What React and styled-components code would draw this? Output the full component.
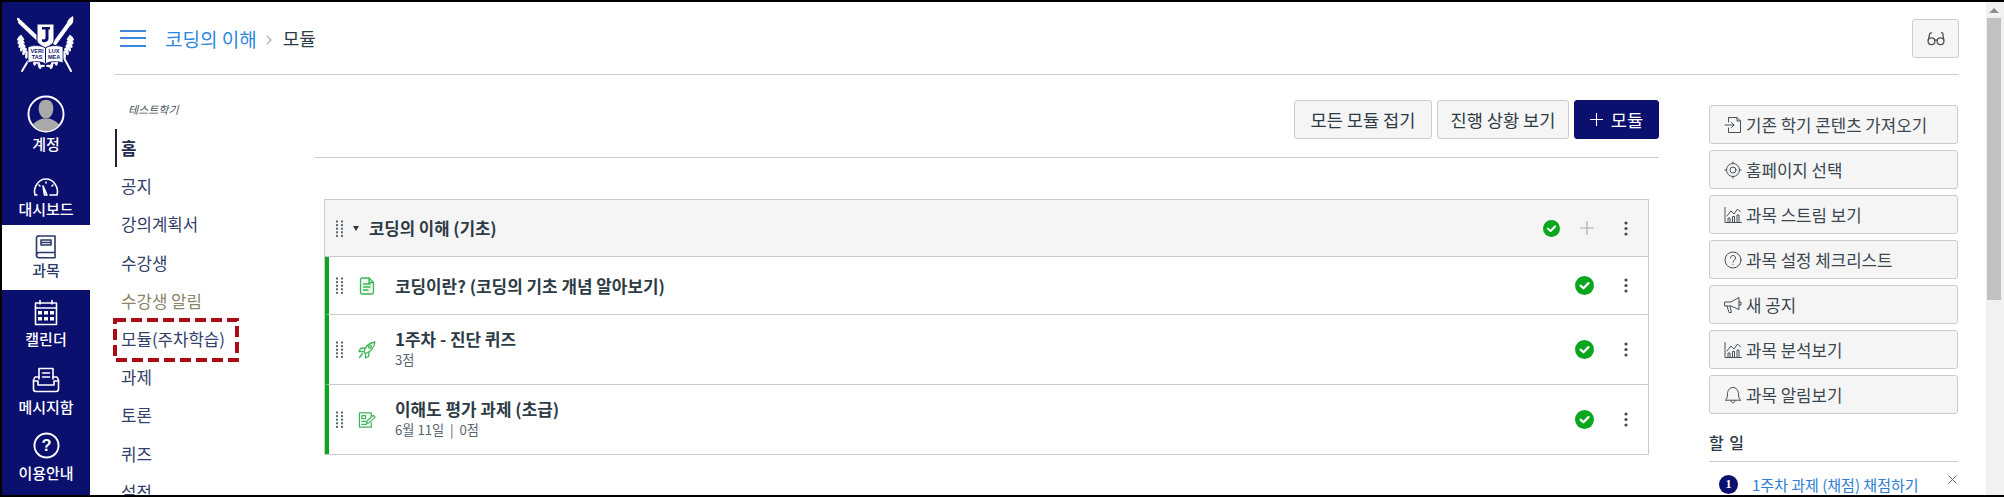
import React from "react";
import styled, { createGlobalStyle } from "styled-components";

const Global = createGlobalStyle`
  html, body { margin: 0; padding: 0; background: #fff; overflow: hidden; }
  * { box-sizing: border-box; }
  body { font-family: "Noto Sans CJK KR", "Noto Sans", sans-serif; color: #2d3b45; }
`;
const NAVY = "#0b0f6e";
const Frame = styled.div`
  width: 2004px; height: 497px; display: flex; overflow: hidden;
  border-top: 2px solid #000; border-bottom: 2px solid #000; border-left: 2px solid #000;
`;
const Sidebar = styled.nav`
  width: 88px; flex: none; background: ${NAVY}; display: flex; flex-direction: column; overflow: hidden;
`;
const LogoBox = styled.div`
  height: 87px; flex: none; padding: 14px 0 0 15px;
`;
const NavItem = styled.div`
  height: ${p => p.$h}px; flex: none; display: flex; flex-direction: column; align-items: center; justify-content: flex-end;
  gap: ${p => p.$gap}px; padding-bottom: ${p => p.$pb}px;
  background: ${p => (p.$active ? "#fff" : "transparent")};
  color: ${p => (p.$active ? "#2b3a6b" : "#fff")};
  font-size: 15px; font-weight: 500; line-height: 20px;
`;
const Main = styled.div`flex: 1; min-width: 0; display: flex; flex-direction: column;`;
const Header = styled.header`
  height: 73px; margin: 0 27px 0 25px; border-bottom: 1px solid #c7cdd1; display: flex; align-items: center;
  padding-left: 5px; flex: none;
`;
const Burger = styled.div`
  width: 26px; height: 17px; display: flex; flex-direction: column; justify-content: space-between; margin-right: 19px;
  span { display: block; height: 2px; background: #3f86e0; }
`;
const Crumb = styled.span`font-size: 19px; color: #2d87e0;`;
const CrumbSep = styled.span`display: flex; margin: 3px 11px 0 9px;`;
const CrumbNow = styled.span`font-size: 18px; color: #2d3b45;`;
const GlassesBtn = styled.button`
  margin-left: auto; width: 47px; height: 39px; background: #f5f5f5; border: 1px solid #c7cdd1; border-radius: 3px;
  display: flex; align-items: center; justify-content: center; padding: 0;
`;
const Body = styled.div`flex: 1; display: flex; padding-left: 25px; min-height: 0; overflow: hidden;`;
const CourseMenu = styled.div`width: 200px; flex: none; padding-top: 26px;`;
const Term = styled.div`font-size: 11px; font-style: italic; color: #4a555d; margin: 0 0 12px 13px; line-height: 16px;`;
const MenuItem = styled.div`
  height: 38.2px; display: flex; align-items: center; position: relative; padding-left: 6px; font-size: 16.8px;
  font-weight: ${p => (p.$current ? 700 : 400)};
  color: ${p => p.$muted ? "#8a8468" : p.$current ? "#262d52" : "#33406a"};
  ${p => p.$current && "border-left: 2px solid #1c2430; padding-left: 4px;"}
`;
const Highlight = styled.svg`
  position: absolute; left: -2px; top: -2px; pointer-events: none;
`;
const Content = styled.div`width: 1344px; flex: none;`;
const Toolbar = styled.div`
  display: flex; justify-content: flex-end; gap: 5px; padding-top: 25px; border-bottom: 1px solid #c7cdd1; height: 83px;
`;
const Button = styled.button`
  height: 39px; width: ${p => p.$w}px; border-radius: 3px; font: 400 17.6px "Noto Sans CJK KR", sans-serif; padding: 0;
  display: flex; align-items: center; justify-content: center; gap: 8px;
  border: 1px solid ${p => (p.$primary ? NAVY : "#c7cdd1")};
  background: ${p => (p.$primary ? NAVY : "#f5f5f5")};
  color: ${p => (p.$primary ? "#fff" : "#2d3b45")};
`;
const Module = styled.section`margin: 41px 10px 0 9px; border: 1px solid #c7cdd1;`;
const ModuleHead = styled.div`
  height: 57px; background: #f5f5f5; border-bottom: 1px solid #c7cdd1; display: flex; align-items: center; padding-left: 10px;
  font-size: 16.7px; font-weight: 700; color: #2d3b45;
`;
const Caret = styled.span`
  width: 0; height: 0; border-left: 3.5px solid transparent; border-right: 3.5px solid transparent; border-top: 5px solid #2d3b45;
  margin: 0 10px 0 9px;
`;
const Row = styled.div`
  height: ${p => p.$h}px; display: flex; align-items: center; border-left: 4px solid #0aa61e; padding-left: 6px;
  & + & { border-top: 1px solid #c7cdd1; }
`;
const IconCell = styled.span`width: 37px; margin-left: 14px; display: flex; flex: none;`;
const ItemText = styled.div`display: flex; flex-direction: column; margin-top: ${p => (p.$meta ? -3 : 0)}px;`;
const ItemTitle = styled.div`font-size: 16.9px; font-weight: 700; color: #2d3b45; line-height: 24px;`;
const ItemMeta = styled.div`font-size: 13.2px; color: #59666e; line-height: 18px;`;
const Actions = styled.div`margin-left: auto; display: flex; align-items: center; flex: none;`;
const KebabCell = styled.span`display: flex; margin: 0 20px 0 30px;`;
const PlusCell = styled.span`display: flex; margin-left: 20px;`;
const Aside = styled.aside`width: 249px; margin-left: 50px; flex: none; padding-top: 30px;`;
const AsideButtons = styled.div`display: flex; flex-direction: column; gap: 6px;`;
const AsideBtn = styled.div`
  height: 39px; background: #f5f5f5; border: 1px solid #c7cdd1; border-radius: 3px; display: flex; align-items: center;
  padding-left: 14px; gap: 4px; font-size: 16.8px; color: #3b474f;
`;
const TodoTitle = styled.h3`
  margin: 15px 0 0; padding-bottom: 6px; font-size: 16px; font-weight: 500; height: 33px; line-height: 26px; letter-spacing: 1px;
  border-bottom: 1px solid #c7cdd1; color: #2d3b45;
`;
const TodoRow = styled.div`display: flex; align-items: center; padding: 12px 0 0 10px; font-size: 15px; color: #2d7dd2; position: relative;`;
const Badge = styled.span`
  width: 19px; height: 19px; border-radius: 50%; background: ${NAVY}; color: #fff; font: 700 12px "Liberation Serif", serif;
  display: flex; align-items: center; justify-content: center; margin-right: 14px; flex: none;
`;
const Close = styled.svg`position: absolute; right: 1px; top: 13px;`;
const Scrollbar = styled.div`width: 18px; flex: none; background: #f1f1f1; display: flex; flex-direction: column; align-items: center; padding-right: 3px;`;
const ScrollArrow = styled.span`
  height: 16px; flex: none; display: flex; align-items: center; justify-content: center;
  &::before { content: ""; border-left: 5px solid transparent; border-right: 5px solid transparent; border-bottom: 5px solid #8e8e8e; }
`;
const Thumb = styled.div`width: 14px; height: 282px; background: #c1c1c1;`;

const Leaves = () => (
  <g fill="#fff">
    {Array.from({ length: 9 }, (_, i) => {
      const t = 175 + i * 9.5; // degrees along the lower-left arc, mirrored to the right
      const r = (t * Math.PI) / 180;
      const lx = 28.5 + 25 * Math.cos(r + Math.PI / 2 - Math.PI / 2);
      const ly = 22 - 30 * Math.sin(r - Math.PI + 0) * -1;
      const y = 22 + (i / 8) * 28;
      const x = 2.5 + Math.pow(i / 8, 2.2) * 20;
      const tilt = 90 - (i / 8) * 55;
      return (
        <g key={i}>
          <ellipse cx={x - 0.2} cy={y} rx="3.4" ry="1.5" transform={`rotate(${tilt + 40} ${x} ${y})`} />
          <ellipse cx={x + 0.2} cy={y} rx="3.4" ry="1.5" transform={`rotate(${tilt - 40 + 80} ${x} ${y}) translate(0 0)`} opacity="0" />
          <ellipse cx={x + 2.6} cy={y} rx="3" ry="1.3" transform={`rotate(${tilt - 40} ${x + 2.6} ${y})`} />
          <ellipse cx={57 - x + 0.2} cy={y} rx="3.4" ry="1.5" transform={`rotate(${-tilt - 40} ${57 - x} ${y})`} />
          <ellipse cx={57 - x - 2.6} cy={y} rx="3" ry="1.3" transform={`rotate(${-tilt + 40} ${57 - x - 2.6} ${y})`} />
        </g>
      );
    })}
  </g>
);
const Logo = () => (
  <svg width="57" height="58" viewBox="0 0 57 58" fill="none">
    <Leaves />
    <g stroke="#fff" strokeLinecap="round">
      <path d="M3 6L21 23" strokeWidth="4" />
      <path d="M54 5L38 27" strokeWidth="4" />
      <path d="M47 42L54 55M11 45L5 55" strokeWidth="2" />
      <path d="M1 3L5 8" strokeWidth="2.5" />
    </g>
    <path d="M50 8C50 4 53 2 56 0C57 4 56 9 52 10Z" fill="#fff" />
    <path d="M20 8H37V24C37 28 32 30 28.5 32C25 30 20 28 20 24Z" fill="#fff" stroke={NAVY} strokeWidth="1" />
    <path d="M25 11H33V13.5H31.5V23C31.5 26 27 27 25 25.5V23C27 24 28.5 23.5 28.5 21.5V13.5H25Z" fill={NAVY} />
    <path d="M11 31C16 29 24 29 28.5 32C33 29 41 29 46 31V47C41 45 33 45 28.5 48C24 45 16 45 11 47Z" fill="#fff" stroke={NAVY} strokeWidth=".8" />
    <g fill={NAVY} fontSize="5.5" fontWeight="700" fontFamily="Liberation Sans, sans-serif" textAnchor="middle">
      <text x="20" y="37">VERI</text><text x="37" y="37">LUX</text>
      <text x="20" y="43">TAS</text><text x="37" y="43">MEA</text>
    </g>
    <path d="M28.5 32V47" stroke={NAVY} strokeWidth="1" />
  </svg>
);
const Avatar = () => (
  <svg width="38" height="38" viewBox="0 0 39 39">
    <defs><clipPath id="av"><circle cx="19.5" cy="19.5" r="17.5" /></clipPath></defs>
    <circle cx="19.5" cy="19.5" r="18" fill={NAVY} stroke="#fff" strokeWidth="2" />
    <g clipPath="url(#av)" fill="#a9a9a9">
      <path d="M12 14C12 8 15 5 19.5 5S27 8 27 14C27 19 24 24 19.5 24S12 19 12 14Z" />
      <path d="M4 36C5 28 11 26 16 24H23C28 26 34 28 35 36V39H4Z" />
    </g>
  </svg>
);
const stroke = { fill: "none", stroke: "currentColor", strokeWidth: 1.6, strokeLinecap: "round", strokeLinejoin: "round" };
const Gauge = () => (
  <svg width="28" height="20" viewBox="0 0 28 20" {...stroke}>
    <path d="M5 18H3C1 11 6 2 14 2S27 11 25 18H18" />
    <path d="M11 9L15 18H12.5Z" />
    <path d="M14 5V6M7 8L8 9M21 8L20 9" />
  </svg>
);
const BookIc = () => (
  <svg width="22" height="24" viewBox="0 0 22 24" {...stroke} color="#2b3a6b">
    <path d="M3.5 1H20V17.5H4C2.5 17.5 1.5 18.5 1.5 20S2.5 22.8 4 22.8H20V17.5" />
    <path d="M1.5 20V3C1.5 2 2.5 1 3.5 1" />
    <path d="M6 5H16V10H6ZM6 7.5H16" />
  </svg>
);
const Calendar = () => (
  <svg width="24" height="27" viewBox="0 0 24 27" {...stroke}>
    <path d="M1.5 4H22.5V25.5H1.5Z" />
    <path d="M1.5 9H22.5M6 1.5V5M18 1.5V5" />
    <g fill="currentColor" stroke="none">
      {[4, 10, 16].flatMap(x => [12, 18].map(y => <rect key={x + "-" + y} x={x} y={y} width="4" height="3.5" />))}
    </g>
  </svg>
);
const Inbox = () => (
  <svg width="28" height="26" viewBox="0 0 28 26" {...stroke}>
    <path d="M7 12V1.5H21V12" />
    <path d="M10.5 6H17.5M10.5 10H17.5" />
    <path d="M7 10H3L1.5 13V22C1.5 23.5 2.5 24.5 4 24.5H24C25.5 24.5 26.5 23.5 26.5 22V13L25 10H21" />
    <path d="M1.5 14H6V18H22V14H26.5" />
  </svg>
);
const Help = () => (
  <svg width="27" height="27" viewBox="0 0 28 28">
    <circle cx="14" cy="14" r="12.5" fill="none" stroke="#fff" strokeWidth="2" />
    <text x="14" y="20" textAnchor="middle" fill="#fff" fontSize="17" fontWeight="700" fontFamily="Liberation Sans, sans-serif">?</text>
  </svg>
);
const Chevron = () => (
  <svg width="6" height="10" viewBox="0 0 6 10" fill="none" stroke="#a3abb0" strokeWidth="1.2"><path d="M.7 .7L5 5L.7 9.3" /></svg>
);
const Glasses = () => (
  <svg width="18" height="15" viewBox="0 0 20 16" fill="none" stroke="#47525a" strokeWidth="1.4" strokeLinecap="round">
    <circle cx="5" cy="11" r="3.8" /><circle cx="15" cy="11" r="3.8" />
    <path d="M8.6 10C9.5 9.4 10.5 9.4 11.4 10M1.3 10L3 3C3.2 2 4 1.6 5 1.8M18.7 10L17.6 2.5C17.4 1.6 16.7 1.4 16 1.6" />
  </svg>
);
const Grip = () => (
  <svg width="9" height="17" viewBox="0 0 9 17" fill="#5b6770">
    {[0, 1, 2, 3, 4].flatMap(r => [0, 1].map(c => <rect key={r + "-" + c} x={c * 5 + 1} y={r * 3.6 + 0.5} width="2" height="2" />))}
  </svg>
);
const Check = ({ size = 19 }) => (
  <svg width={size} height={size} viewBox="0 0 18 18">
    <circle cx="9" cy="9" r="9" fill="#0aa61e" />
    <path d="M5.3 9.2L8 11.6L12.8 6.8" fill="none" stroke="#fff" strokeWidth="2.2" strokeLinecap="round" strokeLinejoin="round" />
  </svg>
);
const Kebab = () => (
  <svg width="4" height="15" viewBox="0 0 4 15" fill="#3f4b53">
    <circle cx="2" cy="2" r="1.6" /><circle cx="2" cy="7.5" r="1.6" /><circle cx="2" cy="13" r="1.6" />
  </svg>
);
const Plus = ({ color = "#a7adb2", size = 14 }) => (
  <svg width={size} height={size} viewBox="0 0 14 14" stroke={color} strokeWidth="1.2"><path d="M7 0V14M0 7H14" /></svg>
);
const green = { fill: "none", stroke: "#3fb45a", strokeWidth: 1.3, strokeLinejoin: "round", strokeLinecap: "round" };
const PageIc = () => (
  <svg width="16" height="18" viewBox="0 0 16 18" {...green} style={{ marginLeft: 1 }}>
    <path d="M1.5 2.5C1.5 1.5 2 1 3 1H10L14.5 5.5V15.5C14.5 16.5 14 17 13 17H3C2 17 1.5 16.5 1.5 15.5Z" fill="#eaf7ec" />
    <path d="M10 1V5.5H14.5M4.5 7H11M4.5 10H11M4.5 13H9" />
  </svg>
);
const RocketIc = () => (
  <svg width="18" height="18" viewBox="0 0 18 18" {...green}>
    <path d="M6 11C7 6 11 2 17 1C16 7 12 11 7.5 12.5Z" />
    <circle cx="12" cy="6" r="1.4" />
    <path d="M6.5 7L2.5 7.5L1 10.5L5 10.5M11 11.5L10.5 15.5L7.5 17L7.5 13M4.5 12.5L1.5 16.5" />
  </svg>
);
const AssignIc = () => (
  <svg width="18" height="18" viewBox="0 0 19 18" {...green}>
    <path d="M14 5V1.5H1.5V16.5H14V12" />
    <path d="M4 4.5H8V7.5H4ZM4 10.5H8M4 13.5H9" />
    <path d="M9 12.5L9.5 10L16 4L18 6L11.5 12Z" />
  </svg>
);
const thin = { fill: "none", stroke: "#47525a", strokeWidth: 1, strokeLinecap: "round", strokeLinejoin: "round" };
const ImportIc = () => (
  <svg width="18" height="18" viewBox="0 0 18 18" {...thin}>
    <path d="M4.5 6V1.5H13L16.5 5V16.5H4.5V12M1 9H10M7.5 6.5L10 9L7.5 11.5M13 1.5V5H16.5" />
  </svg>
);
const TargetIc = () => (
  <svg width="18" height="18" viewBox="0 0 18 18" {...thin}>
    <circle cx="9" cy="9" r="6.5" /><circle cx="9" cy="9" r="3" />
    <path d="M9 .8V2.5M9 15.5V17.2M.8 9H2.5M15.5 9H17.2" />
  </svg>
);
const ChartIc = () => (
  <svg width="18" height="18" viewBox="0 0 18 18" {...thin}>
    <path d="M1 1.5V16.5H17.5" />
    <path d="M3 10L7 5L10 8L13.5 3L16.5 6" />
    <path d="M4 16V12H6V16M8.5 16V10.5H10.5V16M13 16V9H15V16" />
  </svg>
);
const QIc = () => (
  <svg width="18" height="18" viewBox="0 0 18 18" {...thin}>
    <circle cx="9" cy="9" r="8" />
    <path d="M6.5 7C6.5 5.5 7.6 4.5 9 4.5S11.5 5.5 11.5 7C11.5 9 9 9 9 11M9 13.2V13.4" />
  </svg>
);
const MegaIc = () => (
  <svg width="18" height="18" viewBox="0 0 18 18" {...thin}>
    <path d="M1 6H7L15 1.5V13.5L7 10H1ZM3 10L5 16.5H7.5L6 10M15 6H17V9H15" />
  </svg>
);
const BellIc = () => (
  <svg width="18" height="18" viewBox="0 0 18 18" {...thin}>
    <path d="M1.5 14C3 13 3.5 11 3.5 8C3.5 4 6 1.5 9 1.5S14.5 4 14.5 8C14.5 11 15 13 16.5 14ZM7 14.5C7 16 8 16.8 9 16.8S11 16 11 14.5" />
  </svg>
);

const menu = ["공지", "강의계획서", "수강생"];
const menu2 = ["과제", "토론", "퀴즈", "설정"];
const aside = [
  [ImportIc, "기존 학기 콘텐츠 가져오기"], [TargetIc, "홈페이지 선택"], [ChartIc, "과목 스트림 보기"],
  [QIc, "과목 설정 체크리스트"], [MegaIc, "새 공지"], [ChartIc, "과목 분석보기"], [BellIc, "과목 알림보기"],
];

export default function App() {
  return (
    <>
      <Global />
      <Frame>
        <Sidebar>
          <LogoBox><Logo /></LogoBox>
          <NavItem $h={71} $pb={6} $gap={1}><Avatar />계정</NavItem>
          <NavItem $h={65} $pb={6} $gap={2}><Gauge />대시보드</NavItem>
          <NavItem $h={65} $active $pb={10} $gap={1}><BookIc />과목</NavItem>
          <NavItem $h={65} $pb={6} $gap={3}><Calendar />캘린더</NavItem>
          <NavItem $h={65} $pb={3} $gap={4}><Inbox />메시지함</NavItem>
          <NavItem $h={65} $pb={2} $gap={4}><Help />이용안내</NavItem>
        </Sidebar>
        <Main>
          <Header>
            <Burger><span /><span /><span /></Burger>
            <Crumb>코딩의 이해</Crumb><CrumbSep><Chevron /></CrumbSep><CrumbNow>모듈</CrumbNow>
            <GlassesBtn><Glasses /></GlassesBtn>
          </Header>
          <Body>
            <CourseMenu>
              <Term>테스트학기</Term>
              <MenuItem $current>홈</MenuItem>
              {menu.map(m => <MenuItem key={m}>{m}</MenuItem>)}
              <MenuItem $muted>수강생 알림</MenuItem>
              <MenuItem>
                모듈(주차학습)
                <Highlight width="126" height="44" viewBox="0 0 126 44" fill="none">
                  <rect x="2" y="2" width="122" height="40" stroke="#a80d18" strokeWidth="4" strokeDasharray="11 5" />
                </Highlight>
              </MenuItem>
              {menu2.map(m => <MenuItem key={m}>{m}</MenuItem>)}
            </CourseMenu>
            <Content>
              <Toolbar>
                <Button $w={138}>모든 모듈 접기</Button>
                <Button $w={132}>진행 상황 보기</Button>
                <Button $w={85} $primary><Plus color="#fff" size={13} />모듈</Button>
              </Toolbar>
              <Module>
                <ModuleHead>
                  <Grip /><Caret />코딩의 이해 (기초)
                  <Actions>
                    <Check size={17} />
                    <PlusCell><Plus /></PlusCell>
                    <KebabCell><Kebab /></KebabCell>
                  </Actions>
                </ModuleHead>
                <Row $h={57}>
                  <Grip /><IconCell><PageIc /></IconCell>
                  <ItemText><ItemTitle>코딩이란? (코딩의 기초 개념 알아보기)</ItemTitle></ItemText>
                  <Actions><Check /><KebabCell><Kebab /></KebabCell></Actions>
                </Row>
                <Row $h={70}>
                  <Grip /><IconCell><RocketIc /></IconCell>
                  <ItemText $meta><ItemTitle>1주차 - 진단 퀴즈</ItemTitle><ItemMeta>3점</ItemMeta></ItemText>
                  <Actions><Check /><KebabCell><Kebab /></KebabCell></Actions>
                </Row>
                <Row $h={70}>
                  <Grip /><IconCell><AssignIc /></IconCell>
                  <ItemText $meta><ItemTitle>이해도 평가 과제 (초급)</ItemTitle><ItemMeta>6월 11일 &nbsp;|&nbsp; 0점</ItemMeta></ItemText>
                  <Actions><Check /><KebabCell><Kebab /></KebabCell></Actions>
                </Row>
              </Module>
            </Content>
            <Aside>
              <AsideButtons>
                {aside.map(([Ic, t]) => <AsideBtn key={t}><Ic />{t}</AsideBtn>)}
              </AsideButtons>
              <TodoTitle>할 일</TodoTitle>
              <TodoRow>
                <Badge>1</Badge>1주차 과제 (채점) 채점하기
                <Close width="9" height="9" viewBox="0 0 9 9" stroke="#59666e" strokeWidth="1"><path d="M.5 .5L8.5 8.5M8.5 .5L.5 8.5" /></Close>
              </TodoRow>
            </Aside>
          </Body>
        </Main>
        <Scrollbar><ScrollArrow /><Thumb /></Scrollbar>
      </Frame>
    </>
  );
}
